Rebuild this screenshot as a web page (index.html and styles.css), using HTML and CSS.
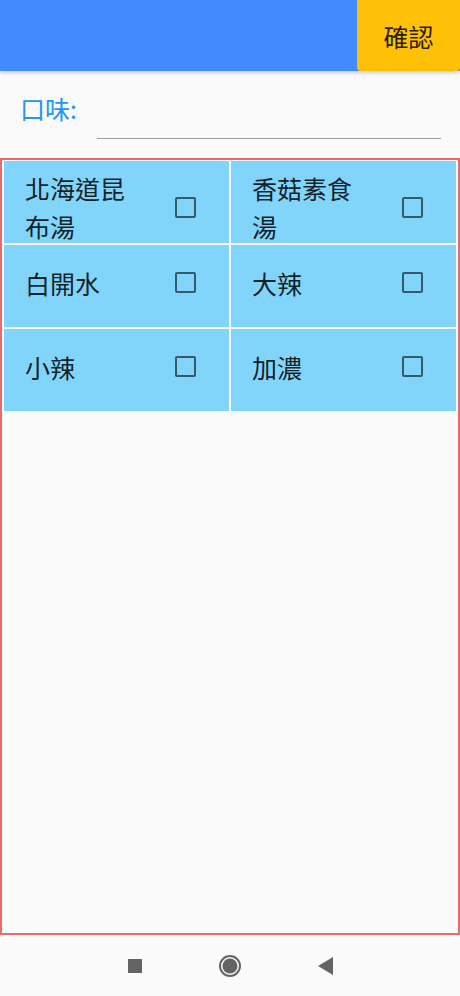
FILE: index.html
```html
<!DOCTYPE html>
<html lang="zh-Hant">
<head>
<meta charset="utf-8">
<title>口味</title>
<link rel="stylesheet" href="styles.css">
</head>
<body>
<div class="app">
  <header class="appbar">
    <button class="confirm">確認</button>
  </header>
  <div class="form-row">
    <label class="label">口味:</label>
    <div class="field"></div>
  </div>
  <main class="panel">
    <div class="grid">
      <div class="cell"><div class="tile"><span class="title">北海道昆布湯</span><span class="check"><span class="box"></span></span></div></div>
      <div class="cell"><div class="tile"><span class="title">香菇素食湯</span><span class="check"><span class="box"></span></span></div></div>
      <div class="cell"><div class="tile"><span class="title">白開水</span><span class="check"><span class="box"></span></span></div></div>
      <div class="cell"><div class="tile"><span class="title">大辣</span><span class="check"><span class="box"></span></span></div></div>
      <div class="cell"><div class="tile"><span class="title">小辣</span><span class="check"><span class="box"></span></span></div></div>
      <div class="cell"><div class="tile"><span class="title">加濃</span><span class="check"><span class="box"></span></span></div></div>
    </div>
  </main>
  <nav class="navbar">
    <span class="nav-item"><svg width="14" height="14" viewBox="0 0 14 14"><rect x="0" y="0" width="14" height="14" fill="#646464"/></svg></span>
    <span class="nav-item"><svg width="22" height="22" viewBox="0 0 22 22"><circle cx="11" cy="11" r="10" fill="none" stroke="#646464" stroke-width="2"/><circle cx="11" cy="11" r="7.5" fill="#646464"/></svg></span>
    <span class="nav-item"><svg width="15" height="18" viewBox="0 0 15 18"><polygon points="15,0 15,18 0,9" fill="#646464"/></svg></span>
  </nav>
</div>
</body>
</html>
```

FILE: styles.css
```css
* {
  box-sizing: border-box;
}

html, body {
  margin: 0;
  padding: 0;
  background: #fafafa;
}

body {
  font-family: "Noto Sans CJK TC", "Noto Sans", sans-serif;
  color: rgba(0, 0, 0, 0.87);
}

.app {
  width: 460px;
  height: 996px;
  display: flex;
  flex-direction: column;
}

.appbar {
  height: 71px;
  flex: none;
  background: #448aff;
  display: flex;
  justify-content: flex-end;
  box-shadow: 0 2px 4px rgba(0, 0, 0, 0.18);
  position: relative;
  z-index: 1;
}

.confirm {
  width: 103px;
  height: 71px;
  margin: 0;
  padding: 0;
  border: none;
  border-radius: 0 0 4px 4px;
  background: #ffc107;
  font-family: inherit;
  font-size: 25px;
  line-height: 36px;
  color: rgba(0, 0, 0, 0.87);
}

.form-row {
  height: 87px;
  flex: none;
  display: flex;
  align-items: flex-start;
  padding: 19px 19px 0 20px;
}

.label {
  width: 77px;
  font-size: 25px;
  line-height: 36px;
  color: #2196f3;
}

.field {
  flex: 1;
  height: 49px;
  border-bottom: 1px solid #9e9e9e;
}

.panel {
  flex: 1;
  border: 2px solid #e86a6a;
  padding: 1px 2px 0 2px;
}

.grid {
  display: grid;
  grid-template-columns: 1fr 1fr;
  grid-auto-rows: 82px;
  gap: 2px;
}

.cell {
  background: #81d4fa;
  padding: 8px 20px 0 21px;
}

.tile {
  display: flex;
  align-items: center;
  min-height: 59px;
  gap: 16px;
}

.title {
  flex: 1;
  font-size: 25px;
  line-height: 38px;
  color: rgba(0, 0, 0, 0.87);
}

.check {
  width: 48px;
  flex: none;
  display: flex;
  justify-content: center;
  align-items: center;
}

.box {
  width: 21px;
  height: 21px;
  border: 2px solid #36596b;
  border-radius: 2px;
}

.navbar {
  height: 61px;
  flex: none;
  display: flex;
  justify-content: center;
  align-items: center;
  gap: 71px;
}

.nav-item {
  width: 24px;
  display: flex;
  justify-content: center;
  align-items: center;
}
```
